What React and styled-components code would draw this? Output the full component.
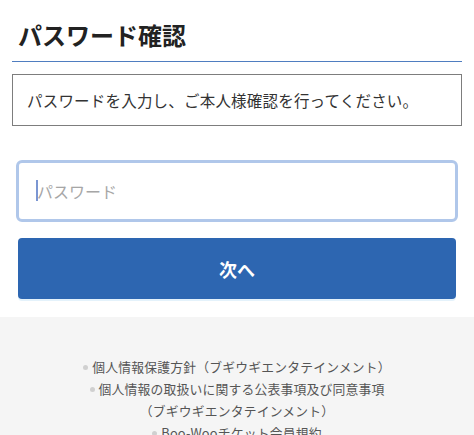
import React from "react";
import styled, { createGlobalStyle } from "styled-components";

const Global = createGlobalStyle`
  html, body { margin: 0; padding: 0; background: #ffffff; }
  body { font-family: "Noto Sans CJK JP", "Noto Sans", sans-serif; color: #222; }
`;

const Main = styled.main`
  padding: 0 12px;
`;

const Title = styled.h1`
  margin: 0;
  padding: 17px 0 8px 6px;
  font-size: 24px;
  line-height: 36px;
  font-weight: 700;
  color: #222;
  border-bottom: 1px solid #4f7dc0;
`;

const Notice = styled.div`
  margin-top: 12px;
  border: 1px solid #7d7d7d;
  height: 50px;
  padding-left: 14px;
  display: flex;
  align-items: center;
  font-size: 15.5px;
  letter-spacing: 0.2px;
  color: #333;
`;

const Form = styled.form`
  margin-top: 34px;
  display: flex;
  flex-direction: column;
  gap: 16px;
`;

const Field = styled.div`
  position: relative;
  margin: 0 4px;
`;

const Input = styled.input`
  display: block;
  box-sizing: border-box;
  width: 100%;
  height: 62px;
  border: 3px solid #b0c7ea;
  border-radius: 6px;
  padding: 0 0 0 18px;
  font-family: "Noto Sans CJK JP", sans-serif;
  font-size: 16px;
  outline: none;
  background: #fff;
  &::placeholder { color: #a6a6a6; }
`;

const Caret = styled.span`
  position: absolute;
  left: 20px;
  top: 20px;
  width: 2px;
  height: 21px;
  background: #7b96d2;
`;

const Button = styled.button`
  margin: 0 6px;
  height: 61px;
  border: none;
  border-radius: 4px;
  background: #2d66b1;
  color: #fff;
  font-family: "Noto Sans CJK JP", sans-serif;
  font-size: 18px;
  font-weight: 700;
  box-shadow: 0 2px 0 #e4f2fb;
`;

const Footer = styled.footer`
  margin-top: 18px;
  background: #f5f5f5;
  padding: 39px 0 20px;
`;

const LinkList = styled.ul`
  margin: 0;
  padding: 0;
  list-style: none;
`;

const LinkItem = styled.li`
  text-align: center;
  font-size: 12.8px;
  line-height: 22px;
  color: #555555;
  letter-spacing: 0.2px;
  &::before {
    content: "";
    display: inline-block;
    width: 5px;
    height: 5px;
    border-radius: 50%;
    background: #d0d0d0;
    margin-right: 4px;
    vertical-align: middle;
    position: relative;
    top: -1px;
  }
`;

export default function App() {
  return (
    <>
      <Global />
      <Main>
        <Title>パスワード確認</Title>
        <Notice>パスワードを入力し、ご本人様確認を行ってください。</Notice>
        <Form onSubmit={(e) => e.preventDefault()}>
          <Field>
            <Input type="password" placeholder="パスワード" />
            <Caret />
          </Field>
          <Button type="submit">次へ</Button>
        </Form>
      </Main>
      <Footer>
        <LinkList>
          <LinkItem>個人情報保護方針（ブギウギエンタテインメント）</LinkItem>
          <LinkItem>
            個人情報の取扱いに関する公表事項及び同意事項
            <br />
            （ブギウギエンタテインメント）
          </LinkItem>
          <LinkItem>Boo-Wooチケット会員規約</LinkItem>
        </LinkList>
      </Footer>
    </>
  );
}
